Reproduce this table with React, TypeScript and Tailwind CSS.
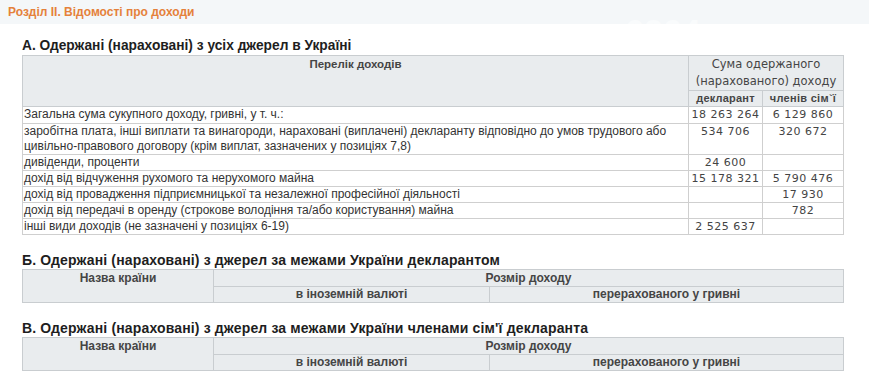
import React from 'react';

type Row = { label: React.ReactNode; decl?: string; family?: string; h: string };

const rows: Row[] = [
  { label: 'Загальна сума сукупного доходу, гривні, у т. ч.:', decl: '18 263 264', family: '6 129 860', h: 'h-[17px]' },
  {
    label: (
      <>
        заробітна плата, інші виплати та винагороди, нараховані (виплачені) декларанту відповідно до умов трудового або
        <br />
        цивільно-правового договору (крім виплат, зазначених у позиціях 7,8)
      </>
    ),
    decl: '534 706',
    family: '320 672',
    h: 'h-[31px]',
  },
  { label: 'дивіденди, проценти', decl: '24 600', h: 'h-[16px]' },
  { label: 'дохід від відчуження рухомого та нерухомого майна', decl: '15 178 321', family: '5 790 476', h: 'h-[16px]' },
  { label: 'дохід від провадження підприємницької та незалежної професійної діяльності', family: '17 930', h: 'h-[16px]' },
  { label: 'дохід від передачі в оренду (строкове володіння та/або користування) майна', family: '782', h: 'h-[16px]' },
  { label: 'інші види доходів (не зазначені у позиціях 6-19)', decl: '2 525 637', h: 'h-[16px]' },
];

const thBase = 'border border-[#c9cdd0] bg-[#e9ecee] text-[#454545] font-bold p-0';
const th = `${thBase} text-[11.5px] leading-[15px]`;
const thF = `${thBase} text-[12px] leading-[15px]`;
const tdBase = 'border border-[#cfcfcf] p-0 leading-[15px] align-top';
const label = `${tdBase} text-[12px] text-[#333] pl-[1px]`;
const num = `${tdBase} font-['DejaVu_Sans',sans-serif] text-[11px] tracking-[0.5px] text-[#444] text-center whitespace-nowrap`;

const ForeignTable = () => (
  <table className="w-[822px] table-fixed border-collapse">
    <colgroup>
      <col className="w-[191px]" />
      <col className="w-[276px]" />
      <col />
    </colgroup>
    <tbody>
      <tr className="h-[17px]">
        <th rowSpan={2} className={`${thF} align-top pt-[1px]`}>Назва країни</th>
        <th colSpan={2} className={thF}>Розмір доходу</th>
      </tr>
      <tr className="h-[16px]">
        <th className={thF}>в іноземній валюті</th>
        <th className={thF}>перерахованого у гривні</th>
      </tr>
    </tbody>
  </table>
);

export default function App() {
  return (
    <div className="relative w-[869px] h-[377px] bg-white overflow-hidden font-['Liberation_Sans',Arial,sans-serif]">
      <div className="h-[24px] bg-[#f4f7f9] flex items-center pl-[8px]">
        <span className="text-[12px] font-semibold text-[#e5813b]">Розділ ІІ. Відомості про доходи</span>
      </div>

      <div className="pl-[22px]">
        <h2 className="mt-[13px] text-[13.75px] leading-[17px] font-bold text-[#1e1e1e]">
          А. Одержані (нараховані) з усіх джерел в Україні
        </h2>
        <table className="mt-[1px] w-[822px] table-fixed border-collapse">
          <colgroup>
            <col className="w-[666px]" />
            <col className="w-[74px]" />
            <col />
          </colgroup>
          <tbody>
            <tr className="h-[33px]">
              <th rowSpan={2} className={`${th} align-top pt-[1px]`}>Перелік доходів</th>
              <th colSpan={2} className={`${thBase} font-normal font-['DejaVu_Sans',sans-serif] text-[11.5px] leading-[17px]`}>
                Сума одержаного
                <br />
                (нарахованого) доходу
              </th>
            </tr>
            <tr className="h-[16px]">
              <th className={`${thBase} text-[11px] leading-[15px] tracking-[0.2px] whitespace-nowrap`}>декларант</th>
              <th className={`${thBase} text-[11px] leading-[15px] tracking-[0.3px] whitespace-nowrap`}>членів сім`ї</th>
            </tr>
            {rows.map((r, i) => (
              <tr key={i} className={r.h}>
                <td className={label}>{r.label}</td>
                <td className={num}>{r.decl}</td>
                <td className={num}>{r.family}</td>
              </tr>
            ))}
          </tbody>
        </table>

        <h2 className="mt-[17px] text-[14px] tracking-[0.15px] leading-[17px] font-bold text-[#1e1e1e]">
          Б. Одержані (нараховані) з джерел за межами України декларантом
        </h2>
        <ForeignTable />

        <h2 className="mt-[17px] text-[14px] tracking-[0.15px] leading-[17px] font-bold text-[#1e1e1e]">
          В. Одержані (нараховані) з джерел за межами України членами сім'ї декларанта
        </h2>
        <ForeignTable />
      </div>

      <div className="absolute left-[625px] top-[14px] text-[34px] font-bold leading-none text-white/50 pointer-events-none">
        6264.com.ua
      </div>
    </div>
  );
}
